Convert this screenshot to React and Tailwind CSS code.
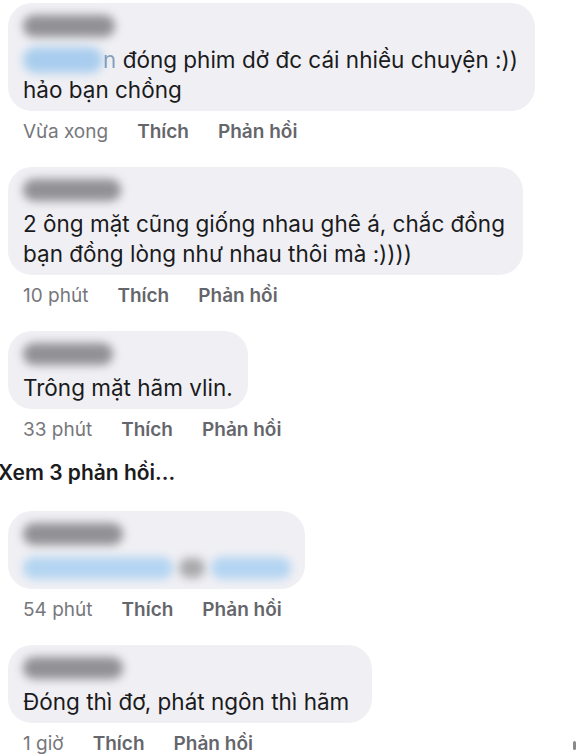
import React from "react";

const font = { fontFamily: "Inter, 'Noto Sans', sans-serif" };

const BlurName = ({ w }) => (
  <div className="h-[22px] flex items-center">
    <div className={`h-[22px] ${w} rounded-full bg-[#86868b] blur-[5px] opacity-90`} />
  </div>
);

const Meta = ({ time }) => (
  <div className="flex gap-[29px] ml-[23px] mt-[9px] h-[24px] items-center text-[19px] leading-[24px] text-[#77777c]">
    <span>{time}</span>
    <span className="font-semibold text-[#65666b]">Thích</span>
    <span className="font-semibold text-[#65666b]">Phản hồi</span>
  </div>
);

const Bubble = ({ width, nameW, children }) => (
  <div className={`${width} ml-[8px] bg-[#f0f0f4] rounded-[24px] pl-[15px] pt-[12px] pb-[6px]`}>
    <BlurName w={nameW} />
    <div className="mt-[8px] text-[22.5px] leading-[30px] text-[#1b1b1d] whitespace-nowrap">
      {children}
    </div>
  </div>
);

export default function App() {
  return (
    <div className="relative w-[580px] h-[756px] bg-white overflow-hidden pt-[3px]" style={font}>
      {/* comment 1 */}
      <Bubble width="w-[527px]" nameW="w-[92px]">
        <div className="flex items-center">
          <span className="inline-block h-[26px] w-[80px] rounded-full bg-[#a9cdee] blur-[5px]" />
          <span className="text-[#5a7fa6] opacity-70">n</span>
          <span>&nbsp;đóng phim dở đc cái nhiều chuyện :))</span>
        </div>
        <div>hảo bạn chồng</div>
      </Bubble>
      <Meta time="Vừa xong" />

      {/* comment 2 */}
      <div className="mt-[23px]">
        <Bubble width="w-[515px]" nameW="w-[98px]">
          <div>2 ông mặt cũng giống nhau ghê á, chắc đồng</div>
          <div>bạn đồng lòng như nhau thôi mà :))))</div>
        </Bubble>
        <Meta time="10 phút" />
      </div>

      {/* comment 3 */}
      <div className="mt-[23px]">
        <Bubble width="w-[240px]" nameW="w-[90px]">
          <div>Trông mặt hãm vlin.</div>
        </Bubble>
        <Meta time="33 phút" />
      </div>

      <div className="mt-[19px] ml-[-2px] h-[24px] text-[21px] leading-[24px] font-semibold text-[#1b1b1d]">
        Xem 3 phản hồi...
      </div>

      {/* comment 4 */}
      <div className="mt-[26px]">
        <Bubble width="w-[297px]" nameW="w-[100px]">
          <div className="flex items-center h-[30px] gap-[6px]">
            <span className="inline-block h-[22px] w-[150px] rounded-full bg-[#b3d4f1] blur-[5px]" />
            <span className="inline-block h-[20px] w-[26px] rounded-full bg-[#a8a8ac] blur-[5px]" />
            <span className="inline-block h-[22px] w-[80px] rounded-full bg-[#b3d4f1] blur-[5px]" />
          </div>
        </Bubble>
        <Meta time="54 phút" />
      </div>

      {/* comment 5 */}
      <div className="mt-[23px]">
        <Bubble width="w-[364px]" nameW="w-[100px]">
          <div>Đóng thì đơ, phát ngôn thì hãm</div>
        </Bubble>
        <Meta time="1 giờ" />
      </div>

      <div className="absolute right-[4px] bottom-[6px] w-[3px] h-[9px] bg-[#8a8a8e] rounded-sm" />
    </div>
  );
}
